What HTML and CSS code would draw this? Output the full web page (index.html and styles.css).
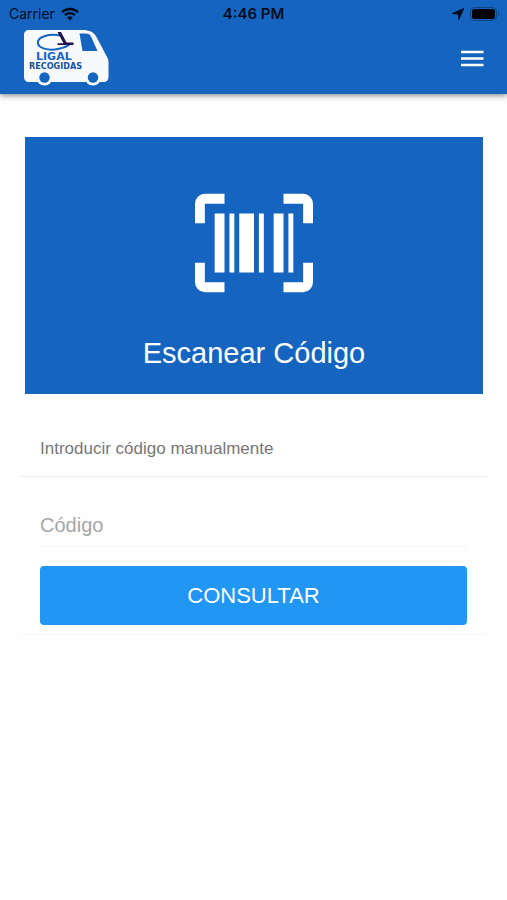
FILE: index.html
```html
<!DOCTYPE html>
<html lang="es">
<head>
  <meta charset="UTF-8" />
  <title>Ligal Recogidas</title>
  <meta name="viewport" content="width=device-width, initial-scale=1.0" />
  <link rel="stylesheet" href="styles.css">
</head>
<body>
  <header class="header">
    <div class="status-bar">
      <div class="status-left">
        <span>Carrier</span>
        <svg width="18" height="14" viewBox="0 0 18 14">
          <path d="M1 5.2a11.5 11.5 0 0 1 16 0" fill="none" stroke="#000c1c" stroke-width="2.4" />
          <path d="M3.9 8.2a7.3 7.3 0 0 1 10.2 0" fill="none" stroke="#000c1c" stroke-width="2.3" />
          <path d="M9 13.6 6.2 10.7a4 4 0 0 1 5.6 0z" fill="#000c1c" />
        </svg>
      </div>
      <div class="status-time">4:46 PM</div>
      <div class="status-right">
        <svg width="12" height="12" viewBox="0 0 12 12">
          <path d="M11.6.6 6.8 11.4 6.4 6 .4 5.6z" fill="#000c1c" stroke="#000c1c" stroke-width="1" stroke-linejoin="round" />
        </svg>
        <svg width="30" height="14" viewBox="0 0 30 14">
          <rect x=".5" y=".5" width="26" height="13" rx="4" fill="none" stroke="#0d4584" />
          <rect x="2" y="2" width="23" height="10" rx="2.5" fill="#000" />
          <path d="M28 5v4a2.2 2.2 0 0 0 0-4z" fill="#0d4584" />
        </svg>
      </div>
    </div>
    <div class="toolbar">
      <a href="#" class="logo" aria-label="Ligal Recogidas">
        <svg width="86" height="58" viewBox="0 0 86 58">
          <path d="M5 0h53c8 0 12 2 15 8l10 19c1 2 1.5 3 1.5 5v15c0 3-2 5-5 5H5c-3 0-5-2-5-5V5c0-3 2-5 5-5z" fill="#f8f9fb" />
          <circle cx="20.5" cy="47.5" r="8" fill="#f8f9fb" />
          <circle cx="69" cy="47.5" r="8" fill="#f8f9fb" />
          <circle cx="20.5" cy="47.5" r="5.2" fill="#1565c0" />
          <circle cx="69" cy="47.5" r="5.2" fill="#1565c0" />
          <path d="M55.5 3.5H62c2.500 0 4 1 5 3L73.500 21h-15z" fill="#1565c0" />
          <path d="M36 5.400C24 3.500 13.800 7 13.800 12.500S24 21.300 35 18.800c5-1.100 8.500-2.500 11-4.800" fill="none" stroke="#1565c0" stroke-width="2" />
          <path d="M33.500 2H37l5.500 10.500h7V15H33.500v-1.800h6z" fill="#20134f" />
          <text class="logo-name" x="12" y="30">LIGAL</text>
          <text class="logo-sub" x="5" y="39">RECOGIDAS</text>
        </svg>
      </a>
      <button class="menu" aria-label="Menú">
        <svg width="24" height="18" viewBox="0 0 24 18">
          <path d="M1 2h22.5M1 8.5h22.5M1 15h22.5" stroke="#fff" stroke-width="2.5" />
        </svg>
      </button>
    </div>
  </header>

  <main class="content">
    <button class="scan">
      <svg width="118" height="118" viewBox="0 0 24 24">
        <path fill="#fff" d="M4,6H6V18H4V6M7,6H8V18H7V6M9,6H12V18H9V6M13,6H14V18H13V6M16,6H18V18H16V6M19,6H20V18H19V6M2,4V8H0V4A2,2 0 0,1 2,2H6V4H2M22,2A2,2 0 0,1 24,4V8H22V4H18V2H22M2,16V20H6V22H2A2,2 0 0,1 0,20V16H2M22,20V16H24V20A2,2 0 0,1 22,22H18V20H22Z" />
      </svg>
      <span>Escanear Código</span>
    </button>

    <form class="card">
      <label class="card-title" for="codigo">Introducir código manualmente</label>
      <div class="card-body">
        <input type="text" id="codigo" placeholder="Código">
        <button type="button" class="submit">CONSULTAR</button>
      </div>
    </form>
  </main>
</body>
</html>
```

FILE: styles.css
```css
:root {
  --primary: #1565c0;
  --accent: #2196f3;
  --status: #000c1c;
}

* {
  box-sizing: border-box;
}

body {
  margin: 0;
  background: #fefefe;
  font-family: "Liberation Sans", Arial, sans-serif;
}

.header {
  background: var(--primary);
  box-shadow: 0 1px 6px rgba(0,0,0,0.55);
}

.status-bar {
  display: grid;
  grid-template-columns: 1fr auto 1fr;
  align-items: center;
  height: 27px;
  padding: 0 7px;
  color: var(--status);
  font-family: Inter, sans-serif;
  font-size: 14px;
}

.status-left, .status-right {
  display: flex;
  align-items: center;
  gap: 6px;
}

.status-left {
  padding-left: 2px;
}

.status-right {
  justify-content: flex-end;
}

.status-time {
  font-weight: 600;
  font-size: 15px;
}

.toolbar {
  display: flex;
  justify-content: space-between;
  align-items: center;
  height: 67px;
  padding: 0 20px 4px 24px;
}

.logo svg, .menu svg {
  display: block;
}

.logo-name {
  fill: var(--primary);
  font-family: "DejaVu Sans", sans-serif;
  font-weight: bold;
  font-size: 11px;
}

.logo-sub {
  fill: #17509c;
  font-family: "DejaVu Sans Condensed", "DejaVu Sans", sans-serif;
  font-weight: bold;
  font-size: 9px;
}

.menu {
  background: none;
  border: none;
  padding: 3px;
  cursor: pointer;
}

.content {
  padding: 43px 20px;
}

.scan {
  display: flex;
  flex-direction: column;
  align-items: center;
  gap: 34px;
  width: calc(100% - 9px);
  margin: 0 4px 0 5px;
  padding: 47px 0 24px;
  background: var(--primary);
  color: white;
  border: none;
  font-family: inherit;
  font-size: 29px;
  line-height: 34px;
  cursor: pointer;
}

.card {
  margin-top: 26px;
  border-bottom: 2px solid #fafafa;
}

.card-title {
  display: block;
  padding: 17px 20px 15px;
  border-bottom: 1px solid #efefef;
  color: #777;
  font-size: 17px;
  line-height: 24px;
}

.card-body {
  padding: 24px 20px 8px;
}

.card-body input {
  display: block;
  width: 100%;
  height: 46px;
  padding: 4px 0 0;
  background: none;
  border: none;
  border-bottom: 2px solid #f8f8f8;
  font-family: inherit;
  font-size: 20px;
}

.card-body input::placeholder {
  color: #a6a6a6;
}

.submit {
  width: 100%;
  height: 59px;
  margin-top: 19px;
  background: var(--accent);
  color: white;
  border: none;
  border-radius: 4px;
  font-family: inherit;
  font-size: 22px;
  cursor: pointer;
}
```
